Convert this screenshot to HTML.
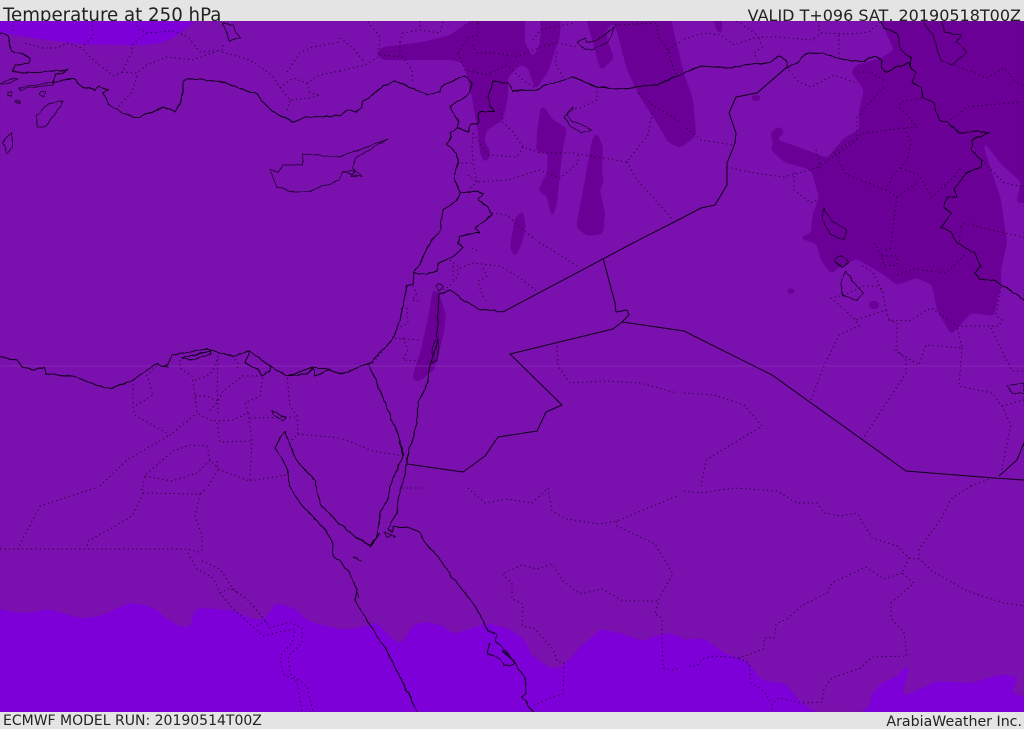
<!DOCTYPE html>
<html><head><meta charset="utf-8"><title>Temperature at 250 hPa</title>
<style>
html,body{margin:0;padding:0;background:#e4e4e4;width:1024px;height:729px;overflow:hidden}
svg{display:block}
text{font-family:"DejaVu Sans","Liberation Sans",sans-serif;fill:#222}
.c{fill:none;stroke:#0a0010;stroke-width:1;stroke-linejoin:round;opacity:.95}
.t{fill:none;stroke:#0a0010;stroke-width:.8;stroke-linejoin:round;opacity:.85}
.b{fill:none;stroke:#0a0010;stroke-width:1;stroke-dasharray:1.2 3.2;opacity:.8}
.d{fill:#6a0096}
</style></head><body>
<svg width="1024" height="729" viewBox="0 0 1024 729" xmlns="http://www.w3.org/2000/svg">
<defs>
<clipPath id="m"><rect x="0" y="21" width="1024" height="691"/></clipPath>
<filter id="g" filterUnits="userSpaceOnUse" x="-60" y="-60" width="1144" height="849" color-interpolation-filters="sRGB">
<feGaussianBlur stdDeviation="2"/>
<feComponentTransfer><feFuncA type="linear" slope="6" intercept="-2.5"/></feComponentTransfer>
</filter>
<filter id="w" filterUnits="userSpaceOnUse" x="-20" y="-20" width="1064" height="769" color-interpolation-filters="sRGB">
<feTurbulence type="fractalNoise" baseFrequency=".12" numOctaves="2" seed="4" result="n"/>
<feDisplacementMap in="SourceGraphic" in2="n" scale="3" xChannelSelector="R" yChannelSelector="G"/>
</filter>
</defs>
<rect width="1024" height="729" fill="#e4e4e4"/>
<text x="3" y="21" font-size="18.2">Temperature at 250 hPa</text>
<text x="1021" y="21" font-size="16" text-anchor="end">VALID T+096 SAT, 20190518T00Z</text>
<text x="3" y="725" font-size="14">ECMWF MODEL RUN: 20190514T00Z</text>
<text x="1022" y="726" font-size="14.2" text-anchor="end">ArabiaWeather Inc.</text>

<g clip-path="url(#m)">
<rect x="0" y="21" width="1024" height="691" fill="#7a10ae"/>
<!-- bright regions -->
<g fill="#7e00d8" filter="url(#g)">
<polygon points="-30,-10 200,-10 195,21 186,29 173,38 160,43 147,45 115,45 80,44 55,41 33,38 15,35 -30,30"/>
<polygon points="-30,607 0,609 10,611 20,613 33,612 47,609 62,613 80,618 95,617 107,613 120,607 130,603 147,605 158,611 167,619 178,625 187,628 191,625 192,618 195,610 200,608 215,609 233,610 245,616 257,620 264,619 269,613 275,603 284,605 293,608 300,613 307,620 322,625 340,629 353,629 365,626 373,623 378,624 383,629 390,637 398,643 403,641 407,636 410,629 415,624 427,622 440,625 447,629 453,634 470,629 487,623 507,628 523,638 528,646 530,654 540,661 552,669 563,666 572,656 583,644 590,639 600,629 620,633 643,641 655,636 667,633 680,636 684,640 701,638 711,643 721,651 734,657 747,661 754,670 761,679 772,682 784,683 790,689 797,698 806,706 817,712 825,730 855,730 861,712 869,706 872,694 878,687 882,683 897,676 904,668 910,667 906,680 902,694 907,695 922,688 937,681 955,682 971,683 990,677 1004,674 1018,678 1014,687 1012,693 1024,696 1054,698 1054,750 -30,750"/>
</g>
<!-- dark regions -->
<g filter="url(#g)">
<polygon class="d" points="470,0 470,21 450,35 423,42 383,47 376,53 383,60 453,60 462,63 465,68 472,97 478,133 480,153 485,164 491,153 484,140 487,130 503,120 508,97 508,77 520,65 528,68 535,90 546,75 550,67 555,50 560,37 561,0 541,0 540,43 533,58 525,43 525,0"/>
<polygon class="d" points="581,0 597,58 601,71 614,58 608,42 606,30 614,22 620,43 627,70 640,97 657,123 668,142 680,148 694,138 696,133 693,100 684,73 675,37 667,0"/>
<polygon class="d" points="710,0 722,0 722,35 716,30"/>
<polygon class="d" points="879,0 881,22 894,50 881,58 856,65 851,72 864,90 859,110 859,130 844,138 827,158 812,152 784,142 776,140 785,132 779,126 770,133 773,142 771,150 784,162 811,170 819,197 812,217 811,233 798,238 814,243 816,243 821,260 831,274 844,264 857,259 881,273 897,285 917,278 932,285 937,310 951,335 971,313 994,316 1001,286 1001,270 1007,243 1001,200 981,138 1002,165 1021,182 1016,203 1054,201 1054,0"/>
<polygon class="d" points="543,105 553,120 567,128 563,147 560,173 557,203 552,220 547,197 538,190 547,173 548,153 536,152 537,133 540,110"/>
<polygon class="d" points="597,132 603,147 602,173 604,180 600,190 605,213 603,234 587,236 576,227 585,180 592,140"/>
<polygon class="d" points="523,210 526,227 522,243 515,258 510,248 511,240 515,218"/>
<polygon class="d" points="433,289 439,293 446,315 444,333 434,370 418,382 412,378 421,350 429,313"/>
</g>
<ellipse cx="756" cy="98" rx="4.5" ry="3" fill="#6a0096"/>
<ellipse cx="791" cy="291" rx="3.5" ry="2.5" fill="#6a0096"/>
<ellipse cx="874" cy="305" rx="5" ry="4" fill="#6a0096"/>
<line x1="0" y1="366" x2="1024" y2="366" stroke="#8c30bb" stroke-width="1" opacity=".7"/>
<rect x="0" y="21" width="1024" height="691" fill="none" stroke="#140020" stroke-width="1" stroke-dasharray="1 3" opacity=".35"/>

<!-- dotted borders -->
<g class="b">
<path d="M13,21L13,33M25,43L43,48 57,48 67,43 82,48 93,60 115,77M92,21L93,37 82,47M137,21L137,28 147,33 173,31 188,37 200,52 222,50 224,42M222,52L250,60 272,75 280,88 290,100 310,98 320,95M147,33L132,45 132,52 122,72 115,76M122,72L137,73 147,65 167,57 193,60 220,50M137,76L132,92 117,108M287,72L300,53 313,47 340,42M280,88L293,78 307,83 320,75 340,71M307,83L310,93 320,95M287,110L290,100"/>
<path d="M340,71L365,65 378,57 380,37 367,21M340,38L353,48 365,63M380,55L403,57 412,70 413,83M400,42L403,33 420,30 440,33 443,21M420,21L420,30M400,42L400,57M458,53L468,38 478,35 478,21M458,53L465,70 487,75 507,65 523,80 535,88M472,45L477,53 497,53 517,57 540,47 558,43 577,47M533,40L540,30 573,23M557,52L555,63 563,77M597,87L597,100 580,108 573,108M615,25L657,23 658,37 668,50 673,67 677,75M668,50L680,42M638,93L655,107 673,117 680,122M652,113L648,135 627,162 573,153 540,153 523,147 513,132 503,122 500,107M523,147L517,157 488,155 473,133M473,133L472,147 473,163 477,182 468,190M457,163L473,163M468,175L477,182 507,180 540,170 560,178 578,163 578,153M627,162L637,180 667,213 673,220M492,213L507,215 523,230 540,243 557,253 577,266"/>
<path d="M460,268L473,263 500,266 517,276 537,291M483,268L487,276 478,281 482,295 488,303M450,260L458,266 458,276 450,286 441,291M453,266L453,280M472,248L477,251M413,286L417,293 412,300 420,301M407,308L408,323 398,328 393,338 420,340M403,338L408,350 403,360 420,361M373,363L393,338"/>
<path d="M343,439L373,451 403,456M298,434L340,438M298,434L297,416 290,406 287,376M292,440L298,434"/>
<path d="M133,380L133,406 135,415 170,435 197,413M157,366L147,375 153,395 135,406M100,486L127,460 170,435M180,360L180,368 192,376 195,396 197,413 210,420 220,421 233,420 248,413 245,403 260,396 263,376 243,376 223,391 218,401 218,416M195,380L207,376 213,371 218,356 217,390 218,401M195,396L207,396 218,401 208,413M217,423L220,442 252,441M248,413L252,441 250,481 220,470 210,460 207,446 190,445 173,451 145,475 143,486M145,476L172,481 197,473 210,460M217,461L218,470 208,486M250,481L287,475M250,418L297,417M232,356L238,363 237,371"/>
<path d="M95,488L40,506 18,548M142,489L143,493 132,516 110,529 88,541 87,548M143,493L200,494 207,488M200,494L195,516 202,536 202,553M0,549L188,549 202,553M188,553L197,569 213,578 220,593 233,609 252,626 263,636 283,631 295,629 292,643 280,656 283,674 297,681 302,712M202,561L220,569 233,589 247,599 263,618 270,628 290,622 302,628 302,643 288,656 290,674 307,686 313,712M220,593L230,588 238,593M253,628L267,621"/>
<path d="M402,488L423,488M468,488L485,503 507,499 532,503 548,488 552,511 567,519 600,524 617,521 677,496M617,521L617,526 655,544 673,574 660,596 655,614 662,618 662,636 663,668 673,670 680,668M657,601L623,601 602,589 580,594 563,581 552,564 537,569 522,565 502,574 512,583 512,599 523,604 522,626 535,629 553,649 557,661 564,663 563,694 550,698 532,706"/>
<path d="M684,393L714,395 744,405 762,426 734,443 706,460 701,486M557,346L558,366 570,383 607,381 640,383 677,393M684,491L701,493 734,488 777,491 797,503 817,503 824,513 841,516 857,513 872,538 897,546 909,558 919,559 932,571 967,591 1004,603 1024,606M971,486L951,499 941,519 919,549 919,559M909,558L902,573 914,583 891,603 891,618 904,633 907,656 872,657 861,668 832,678 824,689 822,702 801,703 779,698 772,704 772,712M902,573L884,579 866,567 832,583 827,593 801,606 787,619 776,624 774,638 764,638 764,649 739,658 714,656 702,659 697,666 687,666M739,658L749,663 751,683 764,691 772,704"/>
<path d="M811,400L824,366 839,335 859,326 856,320 831,298 844,295 864,286 877,286 882,290 886,310 856,320M862,266L872,271 882,290M886,310L889,320 909,321 931,308 957,326M889,320L897,323 897,350 906,360 906,373 862,440M894,350L919,365 926,345 962,348 957,326M957,326L999,326 1002,320 996,315 1001,286M991,328L1012,371 1024,371M962,348L959,386 992,393 1002,406 1011,425 1001,473M1002,406L1024,400M971,486L992,478M882,256L897,256 897,265 884,266 882,256M874,243L882,256M891,248L884,251M897,275L914,269 946,273 967,253"/>
<path d="M684,39L704,33 721,35 734,45 757,37 777,37 812,40 821,33 851,34 869,32 881,21M737,21L757,35M819,21L819,33M759,38L762,47 754,53 757,60M839,35L839,55M786,67L799,82 811,87 834,75 854,82M727,167L754,173 784,177 816,168 839,153 857,140 857,117 884,87M687,128L701,140 734,145M854,72L871,72 886,82M794,172L794,190 811,203 817,200M816,150L821,170M834,153L864,133 904,128 917,127 907,115 899,107 901,102 922,98M904,128L911,143 907,160 892,177 886,190 847,175 839,163 839,153M901,168L919,175 932,197 954,177 961,168M886,190L897,197 917,183M897,197L894,220 891,243M982,160L1004,183 1024,187M951,120L967,107 1021,102M954,65L987,78 1004,68 1014,80 1024,86M961,227L964,223 991,230 1024,237M961,227L959,243"/>
</g>

<!-- straight international borders (no roughening) -->
<g class="c">
<path d="M787,67L757,93 736,97 729,113 736,133 735,143 727,163 727,185 715,205 701,208 684,217 633,243 503,312"/>
<path d="M603,258L615,303 616,312 627,310 629,315 622,322 613,329 510,354 562,405 546,412 537,431 498,437 485,456 463,472 407,464"/>
<path d="M622,322L684,331 772,375 906,471 994,478 1024,480M999,476L1017,460 1024,443"/>
</g>

<!-- coast & rough borders -->
<g filter="url(#w)">
<g class="c">
<path d="M0,33L8,37 10,45 12,52 20,53 30,58 28,63 15,65 12,72 23,73 68,70 55,75 53,83 63,80 73,79 83,87 95,90 98,86 108,90 103,93 108,103 120,112 132,117 140,117 163,107 175,112 180,103 183,93 183,82 188,78 223,82 240,88 257,95 273,112 293,122 307,117 340,116 348,110 355,112 362,107 363,102 383,86 395,81 407,86 427,95 440,92 442,86 455,80 465,76 472,83 470,93 450,107 459,122 457,127 450,132 451,137 447,145 457,153 458,163 454,177 460,193 457,200 443,210 440,230 430,243 420,263 414,273 413,285 407,286 400,320 392,340 370,363 340,374 330,370 313,367 287,376 270,366 250,351 232,356 207,349 172,355 168,365 160,366 157,363 133,380 113,388 105,388 72,376 46,374 44,367 33,370 22,367 17,360 0,357"/>
<path d="M245,363L248,356 250,351M245,363L257,369 262,376 270,371 270,366M182,358L210,351 210,354 190,360ZM287,376L307,374 313,368 315,376 330,370M160,366L168,367"/>
<path d="M457,127L468,132 470,125 478,123 479,112 495,112 490,106 488,97 493,81 508,83 513,91 535,90 547,85 573,77 597,87 623,89 657,85 684,73 701,66 727,68 769,62 779,56 786,60 787,67 797,63 807,53 824,53 844,60 864,61 874,56 882,60 881,67 886,73 897,67 909,63 911,68"/>
<path d="M881,21L884,28 897,33 901,50 911,58 911,68 916,72 912,82 922,88 922,97 934,103 939,120 947,122 959,133 977,131 989,133 972,140 971,150 981,160 981,168 967,172 954,190 957,197 947,197 944,207 951,213 941,228 951,232 957,243 974,253 981,266 975,273 979,279 994,280 1024,300"/>
<path d="M503,312L480,309 465,301 450,290 439,294"/>
<path d="M414,273L427,274 437,271 438,263 450,258 457,253 463,248 458,243 460,237 473,233 480,233 475,228 492,215 488,207 478,200 483,193 477,191 460,193"/>
<path d="M369,364L383,398 388,411 397,431 403,456M439,294L437,336 438,341 428,371 428,383 418,403 417,423 408,453 407,463"/>
<path d="M400,440L403,456 393,478 387,500 380,513 380,523 377,537 370,547M412,440L407,457 405,473 398,500 397,513 388,528 392,532 393,527 407,527 420,532 423,540 437,556 450,574 465,593 477,609 488,631 497,634 495,641 503,648 515,663 525,678 526,693 522,696 533,712"/>
<path d="M285,431L275,448 283,460 288,473 290,486 300,503 322,526 332,541 333,556 340,561 350,574 357,589 355,601 373,629 388,653 408,693 417,712M285,431L292,450 297,461 315,481 320,504 340,524 357,538 370,545 380,533"/>
<path d="M490,643L487,653 500,659 505,666 515,664 508,656 502,650"/>
</g>
<g class="t">
<path d="M303,154L340,157 388,139 355,158 353,168 363,177 342,172 340,180 307,192 293,192 277,187 270,170 278,172 283,165 302,165Z"/>
<path d="M342,172L355,170 351,176 358,177"/>
<path d="M63,101L50,103 36,115 38,127 45,127 55,115ZM12,132L3,143 7,153 12,148ZM18,88L53,82 53,85 33,87 20,90ZM0,84L12,78 18,79 7,84ZM40,92L45,91 44,97 40,95ZM15,100L20,102 20,104 15,102ZM8,92L12,92 12,95 8,95Z"/>
<path d="M924,21L926,28 934,35 936,47 941,60 952,65 967,52 956,42 961,35 944,32 942,21M222,23L230,41 240,38 233,25ZM577,42L585,38 587,43 597,40 607,33 615,27 608,42 592,50 582,48ZM573,107L564,117 570,125 580,133 592,130 585,126 573,122 567,115 573,110ZM846,271L841,283 842,295 857,300 864,293 854,283ZM824,208L822,220 831,235 844,240 846,230 831,220ZM836,258L841,255 849,263 842,267 834,261ZM1007,386L1024,383 1024,393 1012,393ZM272,410L278,413 285,418 283,421 275,416ZM439,283L436,286 439,292 443,287ZM432,350L435,341 439,341 437,360 432,363ZM384,532L392,535 386,537ZM393,536L395,537 393,538ZM353,557L361,560 355,558ZM357,592L359,598"/>
</g>
</g>
</g>
</svg>
</body></html>
